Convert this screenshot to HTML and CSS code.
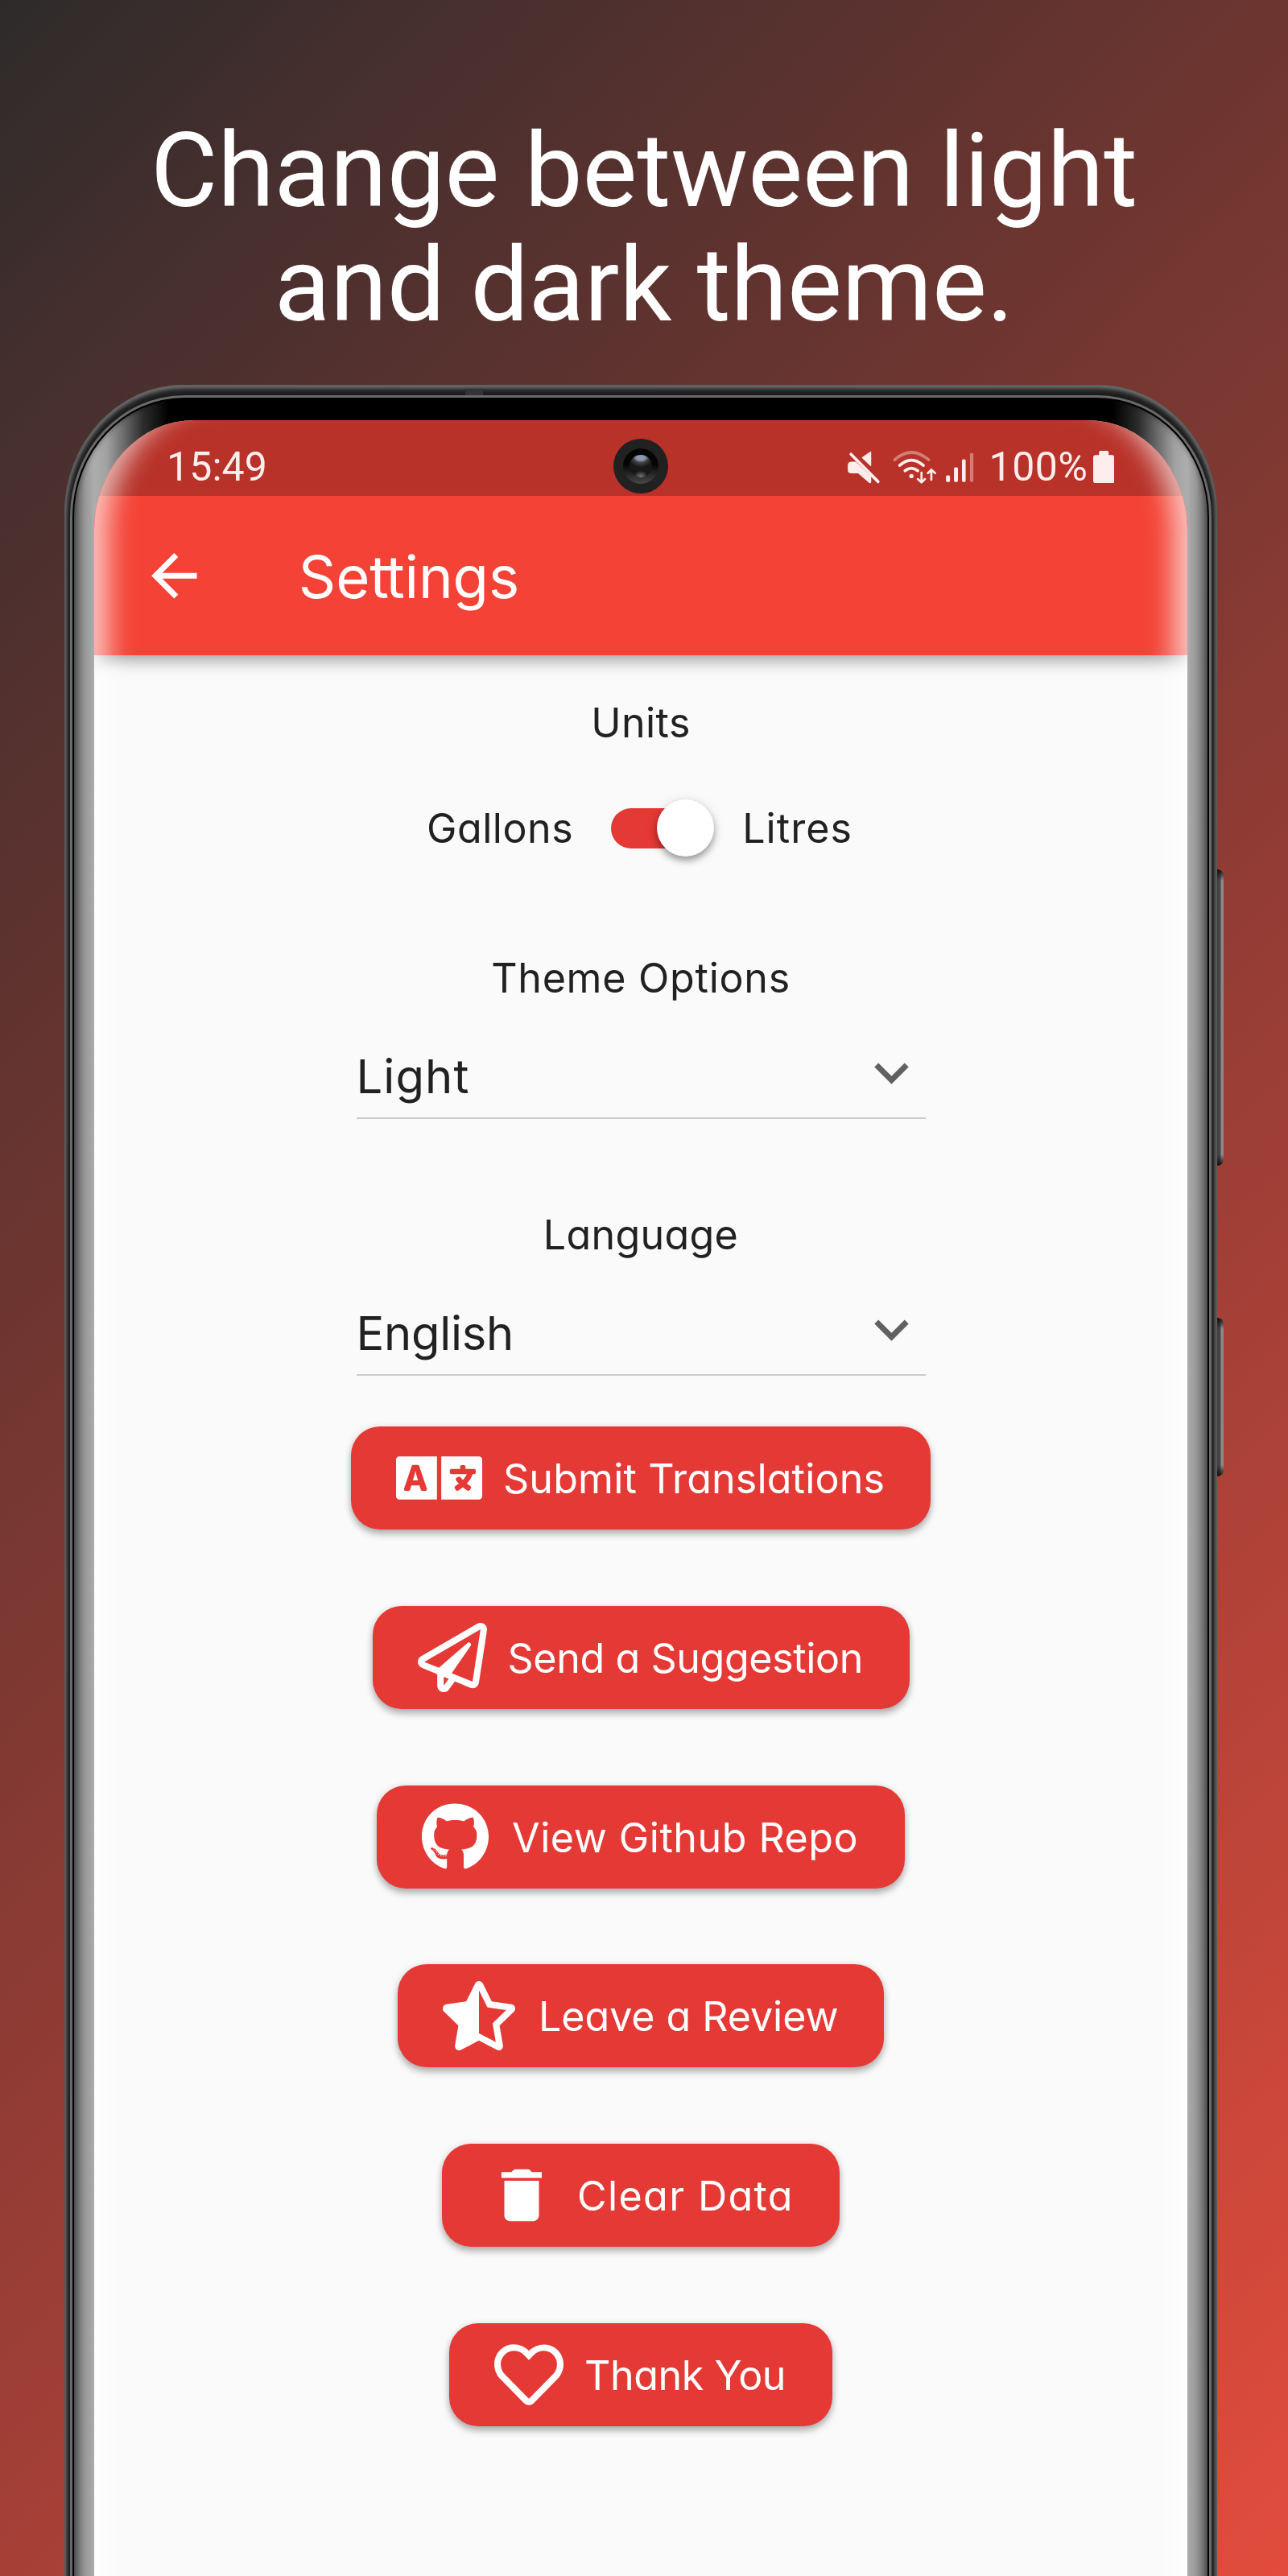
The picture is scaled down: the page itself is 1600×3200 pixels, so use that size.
FILE: index.html
```html
<!DOCTYPE html>
<html lang="en">
<head>
<meta charset="utf-8">
<title>Settings</title>
<link rel="stylesheet" href="styles.css">
</head>
<body>
<div class="poster">
  <h1 class="headline">Change between light<br>and dark theme.</h1>

  <div class="phone">
    <div class="side-key side-key--volume"></div>
    <div class="side-key side-key--power"></div>
    <div class="frame">
      <div class="earpiece"></div>
      <div class="rim">
        <div class="bezel">
          <div class="screen">
            <div class="statusbar">
              <span class="clock">15:49</span>
              <div class="status-icons">
                <svg class="signals" viewBox="34 296 478 124" fill="#fdeeed" stroke="#fdeeed" stroke-linecap="round" stroke-linejoin="round">
                  <path stroke-width="4" d="M122 301v50L91 322z"/>
                  <path stroke="none" d="M50 337h16l58 55v22q0 6-7 3L75 381H50q-14 0-14-14v-16q0-14 14-14z"/>
                  <path fill="none" stroke-width="11" d="M48 309L150 412"/>
                  <g fill="none" stroke-width="11">
                    <path opacity=".4" d="M212 330Q275 274 340 330"/>
                    <path d="M231 351Q275 311 320 351"/>
                    <path d="M251 371Q275 352 299 371"/>
                    <path stroke-width="8" d="M313 378v36M299 402l14 13 13-13M350 405v-36M337 380l13-13 14 13"/>
                  </g>
                  <g stroke="none">
                    <circle cx="275" cy="391" r="8"/>
                    <rect x="405" y="388" width="15" height="25" rx="5"/>
                    <rect x="435" y="358" width="15" height="55" rx="5"/>
                    <rect x="465" y="328" width="14" height="85" rx="5"/>
                    <rect x="495" y="304" width="13" height="109" rx="5" opacity=".4"/>
                  </g>
                </svg>
                <span class="charge">100%</span>
                <svg class="battery" viewBox="0 0 80 122" fill="#fdeeed">
                  <path d="M22 16V5q0-5 5-5h26q5 0 5 5v11h12q10 0 10 10v86q0 10-10 10H10q-10 0-10-10V26q0-10 10-10z"/>
                </svg>
              </div>
            </div>

            <div class="camera"><div class="camera-ring"><div class="camera-lens"></div></div></div>

            <header class="appbar">
              <svg class="back" viewBox="0 0 24 24" fill="#fff"><path d="M20 11H7.83l5.59-5.59L12 4l-8 8 8 8 1.41-1.41L7.83 13H20v-2z"/></svg>
              <span class="appbar-title">Se<span class="tie">t</span>tings</span>
            </header>

            <main class="settings">
              <div class="label label--units">Units</div>
              <div class="toggle-row">
                <span class="gallons">Gallons</span>
                <div class="switch"><div class="track"></div><div class="thumb"></div></div>
                <span class="litres">Litres</span>
              </div>

              <div class="label label--theme">Theme Options</div>
              <div class="select">
                <span class="value value--light">Light</span>
                <svg class="chevron" viewBox="0 0 24 24" fill="#616161"><path d="M7.41 8.59L12 13.17l4.59-4.58L18 10l-6 6-6-6 1.41-1.41z"/></svg>
              </div>

              <div class="label label--language">Language</div>
              <div class="select">
                <span class="value value--english">English</span>
                <svg class="chevron" viewBox="0 0 24 24" fill="#616161"><path d="M7.41 8.59L12 13.17l4.59-4.58L18 10l-6 6-6-6 1.41-1.41z"/></svg>
              </div>

              <div class="actions">
                <div class="button button--translate">
                  <svg class="icon-translate" viewBox="0 0 640 512" fill="#fff"><path d="M152.1 236.2c-3.5-12.1-7.8-33.2-7.8-33.2h-.5s-4.3 21.1-7.8 33.2l-11.1 37.5H163zM616 96H336v320h280c13.3 0 24-10.7 24-24V120c0-13.3-10.7-24-24-24zm-24 120c0 6.6-5.4 12-12 12h-11.4c-6.9 23.6-21.7 47.4-42.7 69.9 8.4 6.4 17.1 12.5 26.1 18 5.5 3.4 7.3 10.5 4.1 16.2l-7.9 13.9c-3.4 5.9-10.9 7.8-16.7 4.3-12.6-7.8-24.5-16.1-35.4-24.9-10.9 8.7-22.7 17.1-35.4 24.9-5.8 3.5-13.3 1.6-16.7-4.3l-7.9-13.9c-3.2-5.6-1.4-12.8 4.2-16.2 9.3-5.7 18-11.7 26.1-18-7.9-8.4-14.9-17-21-25.7-4-5.7-2.2-13.6 3.7-17.1l6.5-3.9 7.3-4.3c5.4-3.2 12.4-1.7 16 3.4 5 7 10.8 14 17.4 20.9 13.5-14.2 23.8-28.9 30-43.2H412c-6.6 0-12-5.4-12-12v-16c0-6.6 5.4-12 12-12h64v-16c0-6.6 5.4-12 12-12h16c6.6 0 12 5.4 12 12v16h64c6.6 0 12 5.4 12 12zM0 120v272c0 13.3 10.7 24 24 24h280V96H24c-13.3 0-24 10.7-24 24zm58.9 216.1L116.4 167c1.7-4.9 6.2-8.1 11.4-8.1h32.5c5.1 0 9.7 3.3 11.4 8.1l57.5 169.1c2.6 7.8-3.1 15.9-11.4 15.9h-22.9a12 12 0 0 1-11.5-8.6l-9.4-31.9h-60.2l-9.1 31.8c-1.5 5.1-6.2 8.7-11.5 8.7H70.3c-8.2 0-14-8.1-11.4-15.9z"/></svg>
                  <span>Submit Translations</span>
                </div>
                <div class="button button--suggest">
                  <svg class="icon-plane" viewBox="0 0 512 512" fill="#fff"><path d="M440 6.5L24 246.4c-34.4 19.9-31.1 70.8 5.7 85.9L144 379.6V464c0 46.4 59.2 65.5 86.6 28.6l43.8-59.1 111.9 46.2c5.9 2.4 12.1 3.6 18.3 3.6 8.2 0 16.3-2.1 23.6-6.2 12.8-7.2 21.6-20 23.9-34.5l59.4-387.2c6.1-40.1-36.9-68.8-71.5-48.9zM192 464v-64.6l36.6 15.1L192 464zm212.6-28.7l-153.8-63.5L391 169.5c10.7-15.5-9.5-33.5-23.7-21.2L155.8 332.6 48 288 464 48l-59.4 387.3z"/></svg>
                  <span>Send a Suggestion</span>
                </div>
                <div class="button button--github">
                  <svg class="icon-github" viewBox="0 0 496 512" fill="#fff"><path d="M165.9 397.4c0 2-2.3 3.6-5.2 3.6-3.3.3-5.6-1.3-5.6-3.6 0-2 2.3-3.6 5.2-3.6 3-.3 5.6 1.3 5.6 3.6zm-31.1-4.5c-.7 2 1.3 4.3 4.3 4.9 2.6 1 5.6 0 6.2-2s-1.3-4.3-4.3-5.2c-2.6-.7-5.5.3-6.2 2.3zm44.2-1.7c-2.9.7-4.9 2.6-4.6 4.9.3 2 2.9 3.3 5.9 2.6 2.9-.7 4.9-2.6 4.6-4.6-.3-1.9-3-3.2-5.9-2.9zM244.8 8C106.1 8 0 113.3 0 252c0 110.9 69.8 205.8 169.5 239.2 12.8 2.3 17.3-5.6 17.3-12.1 0-6.2-.3-40.4-.3-61.4 0 0-70 15-84.7-29.8 0 0-11.4-29.1-27.8-36.6 0 0-22.9-15.7 1.6-15.4 0 0 24.9 2 38.6 25.8 21.9 38.6 58.6 27.5 72.9 20.9 2.3-16 8.8-27.1 16-33.7-55.9-6.2-112.3-14.3-112.3-110.5 0-27.5 7.6-41.3 23.6-58.9-2.6-6.5-11.1-33.3 2.6-67.9 20.9-6.5 69 27 69 27 20-5.6 41.5-8.5 62.8-8.5s42.8 2.9 62.8 8.5c0 0 48.1-33.6 69-27 13.7 34.7 5.2 61.4 2.6 67.9 16 17.7 25.8 31.5 25.8 58.9 0 96.5-58.9 104.2-114.8 110.5 9.2 7.9 17 22.9 17 46.4 0 33.7-.3 75.4-.3 83.6 0 6.5 4.6 14.4 17.3 12.1C428.2 457.8 496 362.9 496 252 496 113.3 383.5 8 244.8 8zM97.2 352.9c-1.3 1-1 3.3.7 5.2 1.6 1.6 3.9 2.3 5.2 1 1.3-1 1-3.3-.7-5.2-1.6-1.6-3.9-2.3-5.2-1zm-10.8-8.1c-.7 1.3.3 2.9 2.3 3.9 1.6 1 3.6.7 4.3-.7.7-1.3-.3-2.9-2.3-3.9-2-.6-3.6-.3-4.3.7zm32.4 35.6c-1.6 1.3-1 4.3 1.3 6.2 2.3 2.3 5.2 2.6 6.5 1 1.3-1.3.7-4.3-1.3-6.2-2.2-2.3-5.2-2.6-6.5-1zm-11.4-14.7c-1.6 1-1.6 3.6 0 5.9 1.6 2.3 4.3 3.3 5.6 2.3 1.6-1.3 1.6-3.9 0-6.2-1.4-2.3-4-3.3-5.6-2z"/></svg>
                  <span>View Github Repo</span>
                </div>
                <div class="button button--review">
                  <svg class="icon-star" viewBox="0 0 536 512" fill="#fff"><path d="M508.55 171.51L362.18 150.2 296.77 17.81C290.89 5.98 279.42 0 267.95 0c-11.4 0-22.79 5.9-28.69 17.81l-65.43 132.38-146.38 21.29c-26.25 3.8-36.77 36.09-17.74 54.59l105.89 103-25.06 145.48C86.98 495.33 103.57 512 122.15 512c4.93 0 10-1.17 14.87-3.75l130.95-68.68 130.94 68.7c4.86 2.55 9.92 3.71 14.83 3.71 18.6 0 35.22-16.61 31.66-37.4l-25.03-145.49 105.91-102.98c19.04-18.5 8.52-50.8-17.73-54.6zm-121.74 123.2l-18.12 17.62 4.28 24.88 19.52 113.45-102.13-53.59-22.38-11.74.03-317.19 51.03 103.29 11.18 22.63 25.01 3.64 114.23 16.63-82.65 80.38z"/></svg>
                  <span>Leave a Review</span>
                </div>
                <div class="button button--clear">
                  <svg class="icon-trash" viewBox="0 0 24 24" fill="#fff"><path d="M6 19c0 1.1.9 2 2 2h8c1.1 0 2-.9 2-2V7H6v12zM19 4h-3.5l-.5-.6q-.4-.4-1-.4h-4q-.6 0-1 .4l-.5.6H5v2h14V4z"/></svg>
                  <span>Clear Data</span>
                </div>
                <div class="button button--thanks">
                  <svg class="icon-heart" viewBox="0 0 512 512" fill="#fff"><path d="M458.4 64.3C400.6 15.7 311.3 23 256 79.3 200.7 23 111.4 15.6 53.6 64.3-21.6 127.6-10.6 230.8 43 285.5l175.4 178.7c10 10.2 23.4 15.9 37.6 15.9 14.3 0 27.6-5.6 37.6-15.8L469 285.6c53.5-54.7 64.7-157.9-10.6-221.3zm-23.6 187.5L259.4 430.5c-2.4 2.4-4.4 2.4-6.8 0L77.2 251.8c-36.5-37.2-43.9-107.6 7.3-150.7 38.9-32.7 98.9-27.8 136.5 10.5l35 35.7 35-35.7c37.8-38.5 97.8-43.2 136.5-10.6 51.1 43.1 43.5 113.9 7.3 150.8z"/></svg>
                  <span>Thank You</span>
                </div>
              </div>
            </main>
          </div>
        </div>
      </div>
    </div>
  </div>
</div>
</body>
</html>
```
FILE: styles.css
```css
* { box-sizing: border-box; }

body { margin: 0; }

.poster {
  width: 1600px;
  height: 3200px;
  overflow: hidden;
  padding-top: 141px;
  background: linear-gradient(135deg, #2d2b2a 0%, #452f2e 11%, #6c3530 33%, #a64037 67%, #e24c3c 100%);
}

.headline {
  margin: 0 0 53px;
  font: 400 128px/142px Roboto, sans-serif;
  letter-spacing: -0.1px;
  color: #fff;
  text-align: center;
}

/* Phone body */
.phone {
  position: relative;
  width: 1432px;
  height: 2740px;
  margin-left: 80px;
}

.side-key {
  position: absolute;
  left: 1431px;
  width: 9px;
  border-radius: 0 8px 8px 0;
  background: linear-gradient(#111, transparent 14px calc(100% - 14px), #111), linear-gradient(90deg, #3c3c3c, #4a4a4a 60%, #8a8a8a 62%);
}

.side-key--volume { top: 602px; height: 368px; }
.side-key--power { top: 1159px; height: 197px; }

.frame {
  position: relative;
  height: 100%;
  padding: 13px 7px 0;
  border-radius: 148px 148px 0 0 / 160px 160px 0 0;
  background: #1c1c1c;
  box-shadow: inset 0 0 0 1px #5a5a5a, inset 0 3px 7px 1px #777, inset 0 0 4px 2px #555;
}

.earpiece {
  position: absolute;
  left: 498px;
  top: 5px;
  width: 22px;
  height: 8px;
  background: #333;
}

.rim {
  height: 100%;
  border: solid #6a6a6a;
  border-width: 3px 3px 0;
  border-radius: 142px 142px 0 0 / 151px 151px 0 0;
  background: #000;
  padding: 2px 2px 0;
}

.bezel {
  height: 100%;
  padding: 26px 25px 0;
  border-radius: 138px 138px 0 0 / 146px 146px 0 0;
  background: linear-gradient(90deg, #5c5c5c 0, #757575 6px, #989898 14px, #adadad 25px, #a2a2a2 40px, #707070 60px, #2c2c2c 86px, #000 118px calc(100% - 118px), #2c2c2c calc(100% - 86px), #707070 calc(100% - 60px), #a2a2a2 calc(100% - 40px), #adadad calc(100% - 25px), #989898 calc(100% - 14px), #757575 calc(100% - 6px), #5c5c5c 100%);
  box-shadow: inset 0 0 7px rgba(0, 0, 0, .4);
}

.screen {
  position: relative;
  height: 100%;
  overflow: hidden;
  border-radius: 124px 124px 0 0 / 136px 136px 0 0;
  background: #fafafa;
  font-family: Inter, sans-serif;
  font-feature-settings: "cv11";
  color: #212121;
}

/* Light reflected by the curved glass along both edges */
.screen::after {
  content: "";
  position: absolute;
  z-index: 2;
  inset: 0;
  border-radius: inherit;
  box-shadow: inset 50px 0 32px -32px rgba(255, 255, 255, .68), inset -50px 0 32px -32px rgba(255, 255, 255, .68);
}

/* Status bar, drawn above the shadow of the app bar */
.statusbar {
  position: relative;
  z-index: 1;
  display: flex;
  align-items: center;
  justify-content: space-between;
  height: 94px;
  padding: 22px 91px 0 90px;
  background: #b83229;
  color: #fdeeed;
  font: 400 50px/60px Roboto, sans-serif;
}

.clock { letter-spacing: .1px; }

.status-icons { display: flex; align-items: center; }

.signals { width: 159px; height: 41px; }

.charge { margin: 0 6px 0 18px; letter-spacing: .5px; }

.battery { width: 26.5px; height: 40.5px; }

.camera {
  position: absolute;
  z-index: 1;
  left: 645px;
  top: 23px;
  display: flex;
  align-items: center;
  justify-content: center;
  width: 68px;
  height: 68px;
  border-radius: 50%;
  background: #212121;
}

.camera-ring {
  display: flex;
  align-items: center;
  justify-content: center;
  width: 44px;
  height: 44px;
  border-radius: 50%;
  background: linear-gradient(#050505 45%, #484848);
}

.camera-lens {
  width: 28px;
  height: 28px;
  border-radius: 50%;
  background: radial-gradient(ellipse 10px 6px at 50% 12%, #8d99b3 50%, transparent), radial-gradient(ellipse 15px 12px at 50% 12%, #777, transparent), radial-gradient(ellipse 9px 7px at 50% 96%, #777, transparent), #181818;
}

/* App bar */
.appbar {
  display: flex;
  align-items: center;
  height: 198px;
  padding-left: 56.6px;
  background: #f44336;
  box-shadow: 0 5px 20px rgba(0, 0, 0, .4);
  color: #fff;
}

.back { width: 84.7px; height: 84.7px; }

.appbar-title {
  margin-left: 112.5px;
  padding-top: 4px;
  font-size: 72.4px;
  line-height: 90px;
  letter-spacing: -.1px;
}

.tie { letter-spacing: -4px; }

/* Settings list */
.settings {
  display: flex;
  flex-direction: column;
  align-items: center;
  padding-top: 52px;
  font-size: 50.2px;
  line-height: 64px;
}

.label--units { letter-spacing: .4px; }
.label--theme { letter-spacing: .7px; margin-top: 118px; }
.label--language { letter-spacing: .3px; margin-top: 112px; }

.toggle-row {
  display: flex;
  align-items: center;
  height: 72px;
  margin-top: 63px;
  padding-right: 3px;
}

.gallons { letter-spacing: .5px; }
.litres { letter-spacing: 1px; }

.switch {
  position: relative;
  width: 128px;
  height: 72px;
  margin: 0 35px 0 47px;
  padding-top: 11px;
}

.track {
  width: 108px;
  height: 50px;
  border-radius: 25px;
  background: #e53935;
}

.thumb {
  position: absolute;
  right: 0;
  top: 0;
  width: 71px;
  height: 71px;
  border-radius: 50%;
  background: #fff;
  box-shadow: 0 5px 8px rgba(0, 0, 0, .35), 0 2px 16px rgba(0, 0, 0, .1);
}

.select {
  display: flex;
  align-items: flex-start;
  justify-content: space-between;
  width: 707px;
  height: 85px;
  margin-top: 58px;
  border-bottom: 2px solid #ccc;
}

.value { font-size: 57.9px; }
.value--light { letter-spacing: 1.1px; }
.value--english { letter-spacing: -.28px; }

.chevron {
  width: 85px;
  height: 85px;
  margin: -15px 0 -20px;
}

.actions {
  display: flex;
  flex-direction: column;
  align-items: center;
  gap: 94.8px;
  margin-top: 63px;
}

.button {
  display: flex;
  align-items: center;
  gap: 26px;
  height: 128px;
  padding-left: 56px;
  border-radius: 36px;
  background: #e53935;
  box-shadow: 0 6px 8px rgba(0, 0, 0, .25), 0 1px 10px rgba(0, 0, 0, .12);
  color: #fff;
}

.button span { padding-top: 2px; white-space: nowrap; }

.button--translate { width: 720px; letter-spacing: .14px; }
.button--suggest { width: 667px; letter-spacing: -.4px; }
.button--github { width: 656px; letter-spacing: .5px; }
.button--review { width: 604px; letter-spacing: -.07px; }
.button--clear { width: 494px; letter-spacing: 1.35px; }
.button--thanks { width: 476px; letter-spacing: -.45px; }

.button--github span, .button--review span { padding-left: 3px; }

.icon-translate { width: 107px; height: 86px; }
.icon-plane, .icon-heart, .icon-trash { width: 86px; height: 86px; }
.icon-github { width: 83px; height: 86px; }
.icon-star { width: 90px; height: 86px; }
```
